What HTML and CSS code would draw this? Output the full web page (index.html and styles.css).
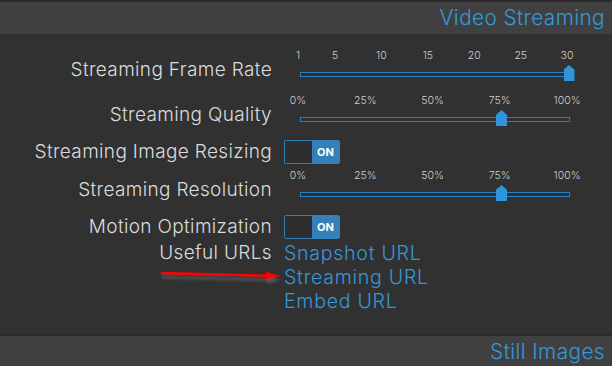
FILE: index.html
```html
<!DOCTYPE html>
<html lang="en">
<head>
    <meta charset="UTF-8" />
    <meta name="viewport" content="width=device-width, initial-scale=1.0" />
    <title>Video Streaming Settings</title>
    <link rel="stylesheet" href="styles.css">
</head>
<body>
    <div class="page">
        <div class="section-head">
            <span class="section-title">Video Streaming</span>
        </div>

        <div class="settings">
            <div class="row slider-row">
                <div class="label">Streaming Frame Rate</div>
                <div class="slider">
                    <div class="ticks">
                        <span style="left: 0%">1</span>
                        <span style="left: 13.8%">5</span>
                        <span style="left: 31%">10</span>
                        <span style="left: 48.3%">15</span>
                        <span style="left: 65.5%">20</span>
                        <span style="left: 82.8%">25</span>
                        <span style="left: 100%">30</span>
                    </div>
                    <div class="track-wrap">
                        <div class="track"></div>
                        <div class="thumb" style="left: 100%"></div>
                    </div>
                </div>
            </div>

            <div class="row slider-row">
                <div class="label">Streaming Quality</div>
                <div class="slider">
                    <div class="ticks">
                        <span style="left: 0%">0%</span>
                        <span style="left: 25%">25%</span>
                        <span style="left: 50%">50%</span>
                        <span style="left: 75%">75%</span>
                        <span style="left: 100%">100%</span>
                    </div>
                    <div class="track-wrap">
                        <div class="track"></div>
                        <div class="thumb" style="left: 75%"></div>
                    </div>
                </div>
            </div>

            <div class="row toggle-row">
                <div class="label">Streaming Image Resizing</div>
                <div class="toggle">
                    <span class="toggle-off"></span>
                    <span class="toggle-on">ON</span>
                </div>
            </div>

            <div class="row slider-row pull-up">
                <div class="label">Streaming Resolution</div>
                <div class="slider">
                    <div class="ticks">
                        <span style="left: 0%">0%</span>
                        <span style="left: 25%">25%</span>
                        <span style="left: 50%">50%</span>
                        <span style="left: 75%">75%</span>
                        <span style="left: 100%">100%</span>
                    </div>
                    <div class="track-wrap">
                        <div class="track"></div>
                        <div class="thumb" style="left: 75%"></div>
                    </div>
                </div>
            </div>

            <div class="row toggle-row">
                <div class="label">Motion Optimization</div>
                <div class="toggle">
                    <span class="toggle-off"></span>
                    <span class="toggle-on">ON</span>
                </div>
            </div>

            <div class="row urls-row">
                <div class="label">Useful URLs</div>
                <div class="urls">
                    <a href="#">Snapshot URL</a>
                    <a href="#">Streaming URL</a>
                    <a href="#">Embed URL</a>
                </div>
            </div>
        </div>

        <div class="section-head">
            <span class="section-title">Still Images</span>
        </div>

        <!-- red annotation arrow drawn over the screenshot -->
        <svg class="annotation" width="612" height="366" viewBox="0 0 612 366">
            <defs>
                <filter id="arrow-shadow" x="-10%" y="-100%" width="120%" height="400%">
                    <feDropShadow dx="1" dy="4" stdDeviation="1.6" flood-color="#6a6a6a" flood-opacity="0.7" />
                </filter>
            </defs>
            <g filter="url(#arrow-shadow)">
                <line x1="161" y1="273" x2="270" y2="275.8" stroke="#ff0000" stroke-width="2.4" />
                <polygon points="266,271.8 280,276 266,279.4" fill="#ff0000" />
            </g>
        </svg>
    </div>
</body>
</html>
```

FILE: styles.css
```css
body {
    margin: 0;
    background: #313131;
    font-family: Inter, "Open Sans", sans-serif;
    font-weight: 300;
    color: #dcdcdc;
}

.page {
    position: relative;
    width: 612px;
    height: 366px;
    overflow: hidden;
}

.section-head {
    height: 32px;
    border-top: 2px solid #2a2a2a;
    background: #404040;
    display: flex;
    justify-content: flex-end;
    align-items: center;
    padding-right: 7px;
}

.section-title {
    color: #3498db;
    font-size: 20.8px;
    line-height: 32px;
    letter-spacing: 0.4px;
}

.settings {
    height: 300px;
    box-sizing: border-box;
    padding-top: 16px;
    display: flex;
    flex-direction: column;
    gap: 13px;
}

.row {
    display: grid;
    grid-template-columns: 272px 1fr;
    column-gap: 12px;
}

.slider-row {
    align-items: end;
}

.toggle-row {
    align-items: center;
}

.pull-up {
    margin-top: -7px;
}

.label {
    text-align: right;
    font-size: 19px;
    line-height: 24px;
    letter-spacing: 0.35px;
    color: #dcdcdc;
    white-space: nowrap;
}

/* sliders */
.slider {
    width: 270px;
    height: 32px;
    padding-left: 16px;
}

.ticks {
    position: relative;
    height: 12px;
    margin: 0 3px 0 -2px;
}

.ticks span {
    position: absolute;
    top: 0;
    transform: translateX(-50%);
    font-size: 10.5px;
    line-height: 12px;
    color: #d0d0d0;
    white-space: nowrap;
}

.track-wrap {
    position: relative;
    height: 20px;
}

.track {
    position: absolute;
    left: 0;
    right: 0;
    top: 10px;
    height: 3px;
    border: 1px solid #2b7fbd;
    background: #2f2f2f;
}

.thumb {
    position: absolute;
    top: 3px;
    width: 11px;
    height: 16px;
    margin-left: -6.5px;
    background: #3094dc;
    clip-path: polygon(50% 0, 100% 30%, 100% 100%, 0 100%, 0 30%);
}

/* on/off switch */
.toggle {
    display: flex;
    width: 56px;
    height: 24px;
    box-sizing: border-box;
    border: 1px solid #2f80bb;
    border-radius: 2px;
    overflow: hidden;
}

.toggle-off {
    width: 27px;
    background: #2e2e2e;
}

.toggle-on {
    flex: 1;
    background: #3580b8;
    color: #ffffff;
    font-size: 11px;
    font-weight: 700;
    line-height: 22px;
    text-align: center;
}

/* useful urls */
.urls-row {
    margin-top: -11px;
    align-items: start;
}

.urls {
    display: flex;
    flex-direction: column;
    align-items: flex-start;
}

.urls a {
    display: block;
    height: 24px;
    color: #3498db;
    text-decoration: none;
    font-size: 19.6px;
    line-height: 24px;
    letter-spacing: 0.7px;
}

.annotation {
    position: absolute;
    left: 0;
    top: 0;
    pointer-events: none;
}
```
